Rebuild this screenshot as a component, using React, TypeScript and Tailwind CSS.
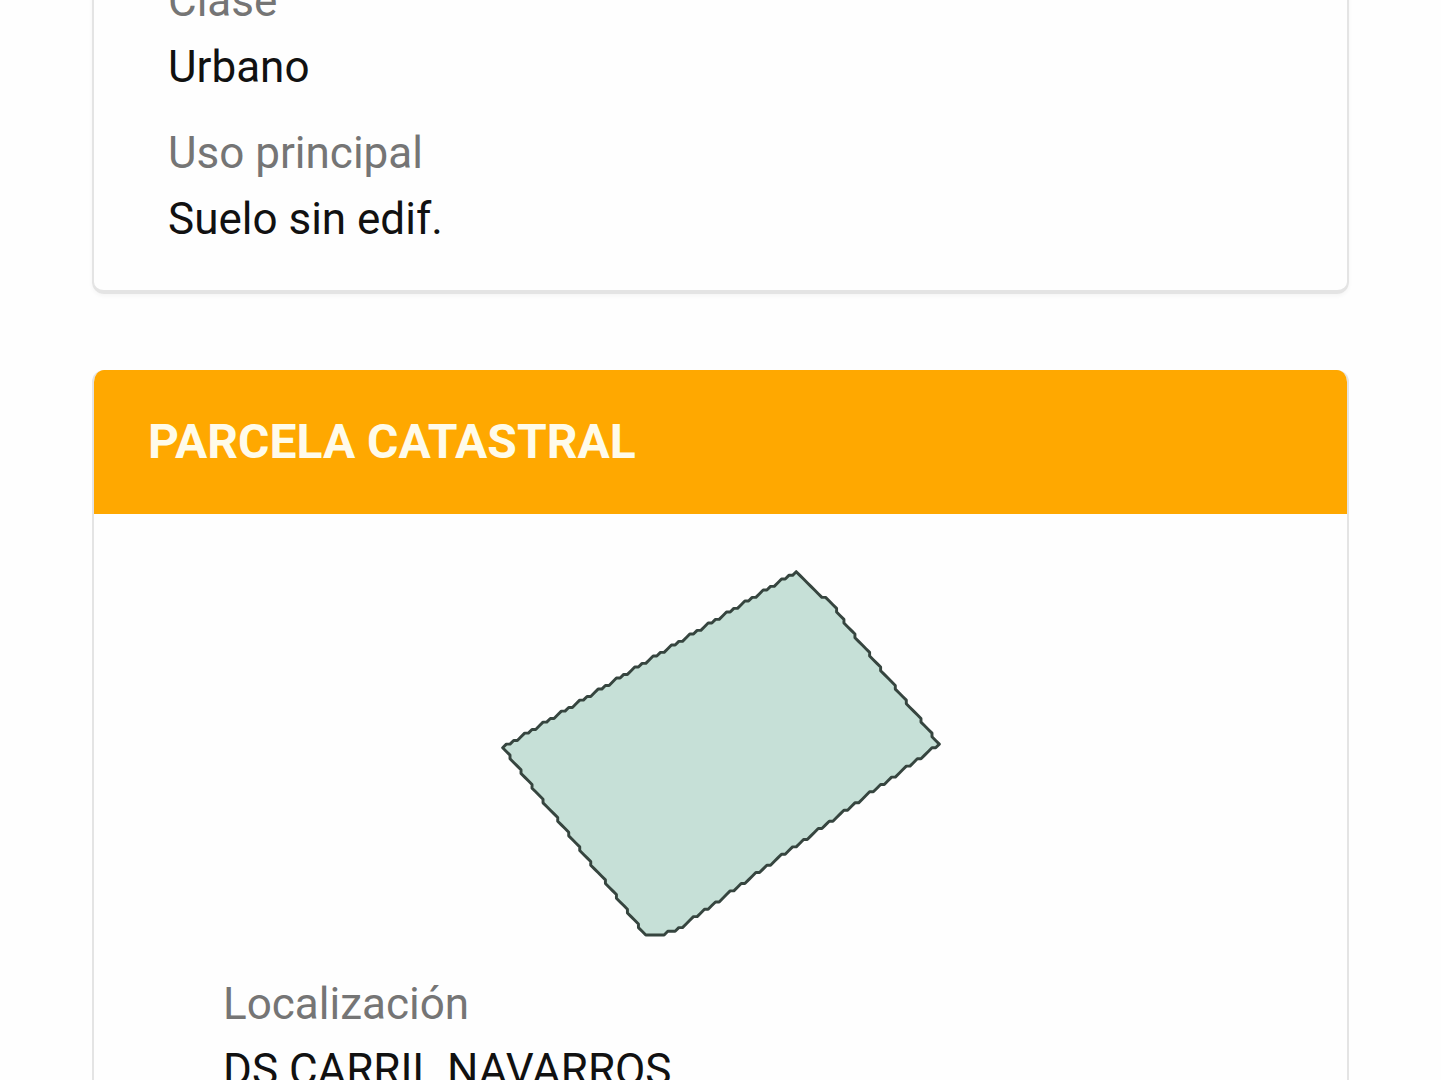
type Point = [number, number];

const CORNERS: Point[] = [
  [0, 48],
  [80, 0],
  [87, 7],
  [88, 7],
  [91, 10],
  [91, 11],
  [119, 47],
  [47, 98],
  [45, 98],
  [44, 99],
  [39, 99],
];

// Walks from one corner to the next over whole grid cells.
function gridLine([x0, y0]: Point, [x1, y1]: Point): Point[] {
  const steps = Math.max(Math.abs(x1 - x0), Math.abs(y1 - y0));
  return Array.from({ length: steps }, (_, i) => [
    Math.round(x0 + ((x1 - x0) * i) / steps),
    Math.round(y0 + ((y1 - y0) * i) / steps),
  ]);
}

const OUTLINE = CORNERS.flatMap((c, i) => gridLine(c, CORNERS[(i + 1) % CORNERS.length]))
  .map((p) => p.join(','))
  .join(' ');

function ParcelShape() {
  return (
    <svg viewBox="-1 -1 121 101" className="mx-auto block w-[444px]" role="img" aria-label="Parcela">
      <polygon points={OUTLINE} fill="#c6e0d7" stroke="#36453f" strokeWidth="0.8" strokeLinejoin="round" />
    </svg>
  );
}

function Field({ label, value }: { label: string; value: string }) {
  return (
    <div>
      <dt className="text-[#757575]">{label}</dt>
      <dd className="text-[#111111]">{value}</dd>
    </div>
  );
}

export default function App() {
  return (
    <main className="flex h-screen flex-col gap-[76px] overflow-hidden bg-[#fefefe] px-[92px] font-['Roboto',sans-serif] text-[44px] leading-[66px]">
      <section className="-mt-8 shrink-0 rounded-b-xl border-2 border-t-0 border-b-4 border-[#e4e4e4] px-[74px] pb-[38px] shadow-[0_2px_4px_rgba(0,0,0,0.04)]">
        <dl className="flex flex-col gap-5">
          <Field label="Clase" value="Urbano" />
          <Field label="Uso principal" value="Suelo sin edif." />
        </dl>
      </section>

      <section className="shrink-0 overflow-hidden rounded-xl border-2 border-t-0 border-[#e4e4e4] pb-10">
        <h2 className="bg-[#ffa800] px-[54px] py-10 text-[48px] leading-[64px] font-bold text-[#fffbea]">
          PARCELA CATASTRAL
        </h2>
        <div className="pt-[54px]">
          <ParcelShape />
        </div>
        <dl className="px-[129px] pt-8">
          <Field label="Localización" value="DS CARRIL NAVARROS" />
        </dl>
      </section>
    </main>
  );
}
